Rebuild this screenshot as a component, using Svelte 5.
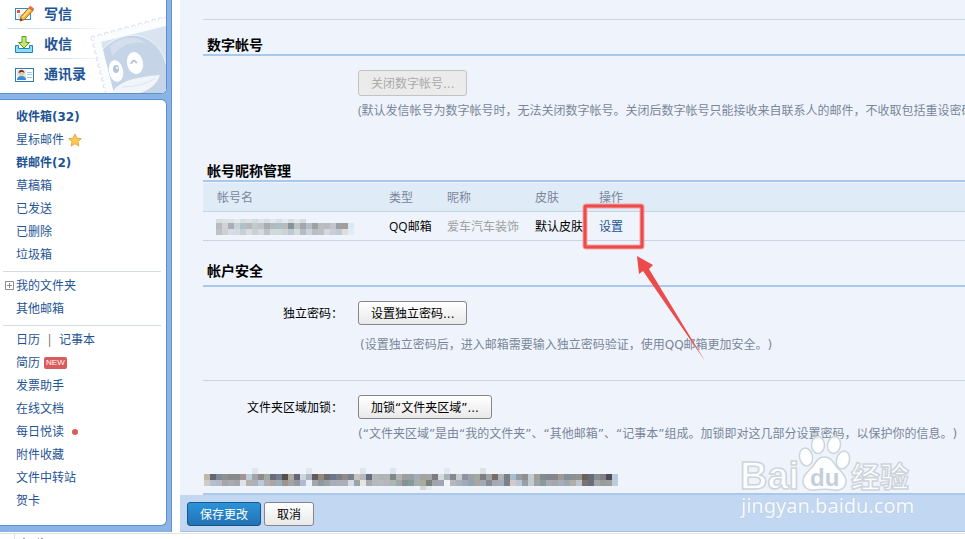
<script>
	const mailboxes = [
		{ name: '收件箱(32)', bold: true },
		{ name: '星标邮件', star: true },
		{ name: '群邮件(2)', bold: true },
		{ name: '草稿箱' },
		{ name: '已发送' },
		{ name: '已删除' },
		{ name: '垃圾箱' }
	];

	const tools = [
		{ name: '发票助手' },
		{ name: '在线文档' },
		{ name: '每日悦读', dot: true },
		{ name: '附件收藏' },
		{ name: '文件中转站' },
		{ name: '贺卡' }
	];

	// each row: [y, height, colours left to right], '-' leaves a hole
	const accountMask = [
		[0, 4, 'd9dde0 d8e1e4 dde0e6 e3e8ee d5dde4 dce2e8 d2dce4 dfe3ea d8dee4 e3e9f0 d8dfe8 e5eaf2 d7dee6 e2e8f0 d4dbe3 - - - - - - - -'],
		[4, 6, 'b8babb cfd3d3 a9adb8 c9d0d8 afc2c6 b8b9bb c2c9ca bec5c6 a9adaf b3b9bc a9c2c5 b9bbb8 86949a bdc2c5 a4a7ac b8bcc5 a0a1a6 bdbdc0 b9bbbe c2c5c9 9ea1a4 a39f97 d8eafa'],
		[10, 6, 'bec2c8 cbd0d2 d8dce2 d3dbe2 c5cfd4 d8dce4 c9cfd4 d5d9dc bcc4c8 d3d8dc d2d8de cdd2d8 c0c8cf d5dade b4bcc6 cdd2da b9bdc4 bcc1c8 d3d9e0 c9ced6 c2cad2 dcdfda e0edf9']
	];

	const lineMask = [
		[0, 6, '- - - - - - - - e0e6ed - - - - - - - - e2e7ef - - - - - - - - dfe5ec - - - - dee5ea - - - - - - - - e3e9f1 - - - - - dce3e6 -'],
		[6, 6, 'c0b8a6 67647c 7d8b95 8d8f90 878a8b 868a8c a19494 bccdd8 a2a4aa 918a8d a3aaa4 696d78 757d95 554e4c abaaa2 66637a cfd6da aab5c2 605d5b 8e887f 6a6c72 6c7688 7a7f86 908a8a 7a838c c8c2c0 b9b8bd 686e80 b2b8b8 adb4b3 b0b5b5 7f8a88 b0b3b5 a09d9a 93a2a8 a7adb3 a3a29f a4a4a4 7a7d85 d5d8dc abb2ba 84898e c4cccf 8d94a1 9da2a4 a2aaa0 7e7f80 9fa2a4 7a6b66 abb2b8 7e7f83 a9bdd2 969ea4 8e8f92 c2cccf a49e99 7b8d8c 858689 87868a a09b92 818f9b 8b9190 8f958e 6f5f5a 676b7c 8a8d92 808089 4e4a58 b9cbdb'],
		[12, 6, 'd0cbc3 b2bfd0 b6bac6 a4a6ab a8abb1 a5a6a9 dfe3e9 b7b1ae aeb0b8 b9c9d7 b3aead aaa6a3 9eaeba 9b948f a5a3a5 9599a2 b3bad0 eaf0f7 a5a6aa 8f989f 9ba3a2 a9adb9 abafb8 acafb6 d4dde7 9ca3ad e8e5df a8aab2 b5b9bb b7babe b4b8bc a9b7b1 a2a7a9 849293 889999 a6aeac a8ab9f 7b827c 9ea4aa a2a6b2 f0f4fa b5b8bf abb1bb a3aab7 92a4b2 a9a49f a2a9b6 8a8c94 a4a8af a4acb5 7e8288 d1ccc9 b7c7d6 989fa5 c2ccd0 9ea3a5 8b9a9d a7abb3 a4a8ac a9adb4 9fa7b1 b1afa8 bec5cd 7c736f 686e7d a3a5a7 999b9c 9ba09f bccddb'],
		[18, 4, '- - - - - - - - - - - - - - - - - - - - - - - - - - - - - - - - - - - - d2d5da e3ebf6']
	];

	function cells(rows) {
		return rows.flatMap(([y, h, colours]) =>
			colours
				.split(' ')
				.map((c, i) => ({ x: i * 6, y, h, fill: '#' + c, skip: c === '-' }))
				.filter((c) => !c.skip)
		);
	}
</script>

<div class="page">
	<div class="body">
		<aside>
			<nav class="card quick">
				<svg class="stamp" width="76" height="77" viewBox="0 0 76 77" aria-hidden="true">
					<path d="M3 22 L76 2 V77 H17 Z" fill="#fbfcfe" stroke="#dbe3ed" stroke-width="5" stroke-linecap="round" stroke-dasharray="0 7" />
					<path d="M3 22 L76 2 V77 H17 Z" fill="#fbfcfe" stroke="#fbfcfe" stroke-width="3" stroke-linecap="round" stroke-dasharray="0 7" />
					<path d="M11 26 L76 10 V77 H24 Z" fill="#dae4f0" />
					<path d="M13 33 C26 19 48 14 62 26 C70 32 74 40 76 48 V77 H24 Z" fill="#c5d5e7" />
					<path d="M13 33 C26 19 48 14 62 26 C70 32 74 40 76 48" fill="none" stroke="#edf2f8" stroke-width="1" />
					<path d="M20 30 C32 20 46 20 56 27 C44 25 32 28 22 40z" fill="#d3dfec" />
					<ellipse cx="26" cy="55" rx="7" ry="11" fill="#fff" transform="rotate(-12 26 55)" />
					<ellipse cx="45" cy="47" rx="8" ry="11" fill="#fff" transform="rotate(-12 45 47)" />
					<ellipse cx="26" cy="53" rx="3" ry="4" fill="#b4c6dc" />
					<circle cx="27" cy="52" r="1" fill="#fff" />
					<path d="M41 48 Q43 42 47 47" fill="none" stroke="#b4c6dc" stroke-width="2" />
					<path d="M22 77 C28 65 46 61 70 59 C67 68 60 74 50 77z" fill="#f1f5fa" />
					<path d="M32 71 Q52 71 66 62" fill="none" stroke="#dae4ef" />
				</svg>
				<a href="#compose">
					<svg width="20" height="18" viewBox="0 0 20 18" aria-hidden="true">
						<rect x="1.500" y="3.500" width="15" height="11" fill="#fff" stroke="#3c86c0" />
						<rect x="3" y="5" width="3" height="3" fill="#e8513d" />
						<path d="M4 10h5M4 12h3" stroke="#a8c6e0" />
						<path d="M6 16l1-4.500L15 2.500l4 3L10.500 14.500z" fill="#f9b233" stroke="#b26a1c" />
						<path d="M8.500 12.500L16 4.500" stroke="#ffe38a" stroke-width="1.500" />
						<path d="M15 2.500l1.500-1.200 3.200 2.500-1 1.700z" fill="#e77b66" stroke="#b25540" stroke-width=".7" />
						<path d="M6 16l.8-2.800 2 1.800z" fill="#4a3a30" />
					</svg>
					写信
				</a>
				<a href="#receive">
					<svg width="20" height="18" viewBox="0 0 20 18" aria-hidden="true">
						<path d="M1.500 10.500h3v3h11v-3h3v7h-17z" fill="#8bdcf6" stroke="#2682bb" />
						<path d="M8 1.500h4v6h3.500L10 13 4.500 7.500H8z" fill="#c6e878" stroke="#5b9b20" />
					</svg>
					收信
				</a>
				<a href="#contacts">
					<svg width="20" height="18" viewBox="0 0 20 18" aria-hidden="true">
						<rect x="1.500" y="3.500" width="18" height="13" fill="#fff" stroke="#2f7ab8" />
						<rect x="3" y="5" width="9" height="10" fill="#d5ebfa" />
						<path d="M3 15c0-3 2-4 4.500-4s4.500 1 4.500 4z" fill="#3f8ad0" />
						<circle cx="7.500" cy="8.500" r="2.500" fill="#f7c59d" />
						<path d="M4.500 8.500c0-5 6-5 6 0-1-2-4-2-6 0z" fill="#7c3422" />
						<path d="M13 7.500h5M13 9.500h5M13 12.500h5" stroke="#a4c7e4" />
					</svg>
					通讯录
				</a>
			</nav>

			<nav class="card folders">
				<ul>
					{#each mailboxes as box}
						<li>
							<a href="#folder" class:bold={box.bold}>{box.name}</a>
							{#if box.star}
								<svg class="star" width="14" height="14" viewBox="0 0 14 14" aria-hidden="true">
									<path d="M7 1l1.800 4.200 4.500.4-3.400 3 1 4.500L7 10.700l-3.900 2.400 1-4.500-3.400-3 4.500-.4z" fill="#fcc94b" stroke="#e9a650" />
								</svg>
							{/if}
						</li>
					{/each}
				</ul>
				<hr />
				<ul>
					<li class="tree">
						<button class="expand" aria-label="我的文件夹">
							<svg width="9" height="9" viewBox="0 0 9 9" aria-hidden="true">
								<path d="M.5.5h8v8h-8zM2 4.500h5M4.500 2v5" fill="none" stroke="#8c8c8c" />
							</svg>
						</button>
						<a href="#mine">我的文件夹</a>
					</li>
					<li><a href="#other">其他邮箱</a></li>
				</ul>
				<hr />
				<ul>
					<li>
						<a href="#calendar">日历</a><span class="bar">|</span><a href="#notes">记事本</a>
					</li>
					<li><a href="#resume">简历</a><span class="new">NEW</span></li>
					{#each tools as tool}
						<li>
							<a href="#tool">{tool.name}</a>
							{#if tool.dot}<span class="dot"></span>{/if}
						</li>
					{/each}
				</ul>
			</nav>
		</aside>

		<main>
			<div class="content">
				<section class="numeric">
					<h2>数字帐号</h2>
					<div class="field">
						<button class="btn" disabled>关闭数字帐号...</button>
						<p>(默认发信帐号为数字帐号时，无法关闭数字帐号。关闭后数字帐号只能接收来自联系人的邮件，不收取包括重设密码</p>
					</div>
				</section>

				<section class="accounts">
					<h2>帐号昵称管理</h2>
					<table>
						<thead>
							<tr>
								<th class="c-name">帐号名</th>
								<th class="c-type">类型</th>
								<th class="c-nick">昵称</th>
								<th class="c-skin">皮肤</th>
								<th>操作</th>
							</tr>
						</thead>
						<tbody>
							<tr>
								<td>
									<svg class="mask" width="138" height="16" aria-hidden="true">
										{#each cells(accountMask) as c}
											<rect x={c.x} y={c.y} width="6" height={c.h} fill={c.fill} />
										{/each}
									</svg>
								</td>
								<td>QQ邮箱</td>
								<td class="muted">爱车汽车装饰</td>
								<td>默认皮肤</td>
								<td>
									<span class="action">
										<a href="#set">设置</a>
										<svg class="pointer" width="126" height="162" viewBox="0 0 126 162" aria-hidden="true">
											<rect x="3" y="3" width="57" height="41" rx="1" fill="none" stroke="#f4a3a6" stroke-width="5" />
											<rect x="3" y="3" width="57" height="41" rx="1" fill="none" stroke="#ec4a4b" stroke-width="3" />
											<path d="M55 53L71 62 67 66 123 158 61 68 57 71z" fill="#ec4a4b" />
										</svg>
									</span>
								</td>
							</tr>
						</tbody>
					</table>
				</section>

				<section class="security">
					<h2>帐户安全</h2>
					<div class="row">
						<label for="password">独立密码：</label>
						<div>
							<button class="btn" id="password">设置独立密码...</button>
							<p>(设置独立密码后，进入邮箱需要输入独立密码验证，使用QQ邮箱更加安全。)</p>
						</div>
					</div>
					<div class="row lock">
						<label for="lock">文件夹区域加锁：</label>
						<div>
							<button class="btn" id="lock">加锁“文件夹区域”...</button>
							<p>(“文件夹区域”是由“我的文件夹”、“其他邮箱”、“记事本”组成。加锁即对这几部分设置密码，以保护你的信息。)</p>
						</div>
					</div>
				</section>

				<svg class="mask line" width="414" height="22" aria-hidden="true">
					{#each cells(lineMask) as c}
						<rect x={c.x} y={c.y} width="6" height={c.h} fill={c.fill} />
					{/each}
				</svg>
			</div>

			<footer>
				<button class="btn primary">保存更改</button>
				<button class="btn">取消</button>
			</footer>
		</main>
	</div>

	<div class="strip">
		<svg width="50" height="5" viewBox="0 0 50 5" aria-hidden="true">
			<path d="M14.500 0v5" stroke="#e3e3e3" />
			<path d="M23 4.500h2M38 4.500h1M41 4.500h2" stroke="#999" />
		</svg>
	</div>

	<svg class="watermark" width="176" height="84" viewBox="0 0 176 84" aria-hidden="true">
		<g fill="#fff" fill-opacity=".85" stroke="#cdd4dc" stroke-width="1.500">
			<text class="wm-logo" x="1" y="54">Bai</text>
			<ellipse cx="67" cy="22" rx="6.500" ry="9" transform="rotate(-12 67 22)" />
			<ellipse cx="79" cy="10" rx="6.500" ry="8.500" />
			<ellipse cx="95" cy="10" rx="6.500" ry="8.500" transform="rotate(12 95 10)" />
			<ellipse cx="104" cy="25" rx="6.500" ry="9" transform="rotate(15 104 25)" />
			<path d="M85 22c7 0 9 5 12 9 4 5 10 8 10 15 0 8-7 10-12 9-6-1-13-1-19 0-6 1-12-2-12-9s6-10 10-15c3-4 5-9 11-9z" />
			<text class="wm-cn" x="112" y="53">经验</text>
		</g>
		<text class="wm-du" x="71" y="51">du</text>
		<text class="wm-url" x="2" y="78">jingyan.baidu.com</text>
	</svg>
</div>

<style>
	:global(body) {
		margin: 0;
		background: #fff;
		overflow: hidden;
	}

	.page {
		position: relative;
		overflow: hidden;
		font: 12px/20px "Open Sans", "Noto Sans CJK SC", sans-serif;
		text-spacing-trim: space-all;
		color: #000;
	}

	.body {
		display: grid;
		grid-template-columns: 172px minmax(0, 1fr);
		column-gap: 8px;
	}

	a {
		color: #1e5494;
		text-decoration: none;
	}

	aside {
		box-sizing: border-box;
		display: flex;
		flex-direction: column;
		gap: 5px;
		padding: 0 4px 6px 0;
		background: #8ab4e8;
		border-right: 1px solid #6794cc;
	}

	.card {
		background: #fff;
		border: 1px solid #5f8fca;
		border-left: 0;
		border-radius: 0 6px 6px 0;
	}

	.quick {
		position: relative;
		margin-top: -1px;
		padding-bottom: 4px;
		border-top: 0;
		border-top-right-radius: 0;
		overflow: hidden;
	}

	.quick a {
		position: relative;
		display: flex;
		align-items: center;
		gap: 10px;
		height: 29px;
		padding-left: 14px;
		font-size: 14px;
		font-weight: bold;
		border-bottom: 1px solid transparent;
	}

	.quick a:not(:last-child) {
		border-image: linear-gradient(90deg, #fff 4%, #cfdded 6%, #d8e3f0 40%, transparent 65%) 1;
	}

	.stamp {
		position: absolute;
		right: 0;
		bottom: 0;
	}

	.folders {
		flex: 1;
		padding: 5px 5px 12px 0;
	}

	ul {
		list-style: none;
		margin: 0;
		padding: 0 0 0 16px;
	}

	li {
		display: flex;
		align-items: center;
		height: 23px;
	}

	.folders hr {
		margin: 5px 0 2px 3px;
	}

	hr {
		height: 1px;
		border: 0;
		background: #d5dbe5;
	}

	.bold {
		font-family: "DejaVu Sans", "Noto Sans CJK SC", sans-serif;
		font-weight: bold;
	}

	.star {
		margin-left: 4px;
	}

	.tree {
		margin-left: -11px;
	}

	.expand {
		display: flex;
		margin: 0 2px 0 0;
		padding: 0;
		border: 0;
		background: none;
	}

	.bar {
		width: 19px;
		text-align: center;
		color: #666;
	}

	.new {
		margin-left: 4px;
		padding: 0 2px;
		font: 8px/12px "Liberation Sans", Arial, sans-serif;
		color: #fff;
		background: #db5a5c;
		border-radius: 2px;
	}

	.dot {
		width: 6px;
		height: 6px;
		margin-left: 8px;
		border-radius: 50%;
		background: #db5a5c;
	}

	main {
		background: #eff4fc;
		border-bottom: 1px solid #a5bfdc;
		overflow: hidden;
	}

	.content {
		margin-left: 23px;
		padding-top: 19px;
		border-bottom: 2px solid #a9c8ea;
	}

	h2 {
		margin: 0;
		padding: 0 4px;
		font-size: 14px;
		line-height: 18px;
		border-bottom: 2px solid #a9c8ea;
	}

	.numeric {
		padding-top: 16px;
		border-top: 1px solid #c8d5e3;
	}

	.field {
		padding: 14px 0 0 155px;
	}

	p {
		margin: 0;
		color: #798699;
		white-space: nowrap;
	}

	.numeric p {
		margin-top: 5px;
	}

	.btn {
		box-sizing: border-box;
		display: block;
		height: 24px;
		padding: 1px 12px 0;
		font: 12px/20px "DejaVu Sans", "Noto Sans CJK SC", sans-serif;
		color: #000;
		background: linear-gradient(#fff, #e9e9e9);
		border: 1px solid #868686;
		border-radius: 3px;
	}

	.btn:disabled {
		height: 26px;
		color: #aaa;
		background: #ebebeb;
		border-color: #c3c3c3;
	}

	.btn.primary {
		color: #fff;
		background: linear-gradient(#2b93d8, #2273b4);
		border-color: #1a5685;
	}

	.accounts {
		padding-top: 41px;
	}

	table {
		width: 100%;
		margin-top: 1px;
		table-layout: fixed;
		border-collapse: separate;
		border-spacing: 0;
	}

	th,
	td {
		height: 26px;
		padding: 2px 0 0;
		text-align: left;
		font-weight: normal;
		white-space: nowrap;
		border-bottom: 1px solid #c5d5e6;
	}

	th {
		color: #798699;
		background: #e0ebf8;
	}

	th:first-child {
		padding-left: 14px;
	}

	td:first-child {
		padding-left: 13px;
	}

	.c-name {
		width: 172px;
	}

	.c-type {
		width: 58px;
	}

	.c-nick {
		width: 88px;
	}

	.c-skin {
		width: 64px;
	}

	.muted {
		color: #a0a0a0;
	}

	.mask {
		display: block;
	}

	.action {
		position: relative;
	}

	.pointer {
		position: absolute;
		left: -17px;
		top: -15px;
		z-index: 2;
		pointer-events: none;
	}

	.security {
		padding-top: 21px;
	}

	.security h2 {
		padding-bottom: 5px;
	}

	.security p {
		font-family: "DejaVu Sans", "Noto Sans CJK SC", sans-serif;
	}

	.row {
		display: grid;
		grid-template-columns: 140px 1fr;
		column-gap: 15px;
		padding: 14px 0 25px;
	}

	.row label {
		padding-top: 3px;
		text-align: right;
		white-space: nowrap;
	}

	.row p {
		margin: 10px 0 0 2px;
	}

	.lock {
		padding-bottom: 24px;
		border-top: 1px solid #c3d4e6;
	}

	.lock p {
		margin: 5px 0 0;
	}

	.line {
		margin: 0 0 3px 1px;
	}

	footer {
		display: flex;
		gap: 3px;
		padding: 7px 7px 5px;
		background: #c2d8f2;
	}

	.strip {
		height: 5px;
		margin-top: 1px;
		border-top: 1px solid #e3e3e3;
	}

	.strip svg {
		display: block;
	}

	.watermark {
		position: absolute;
		right: 50px;
		bottom: 20px;
		pointer-events: none;
	}

	.wm-logo {
		font: bold 38px "Liberation Sans", Arial, sans-serif;
	}

	.wm-cn {
		font: bold 29px "Noto Sans CJK SC", sans-serif;
	}

	.wm-du {
		font: bold 24px "Liberation Sans", Arial, sans-serif;
		fill: #c6ced9;
	}

	.wm-url {
		font: 20px "Noto Sans", sans-serif;
		fill: #f6f9fd;
		stroke: #b9cade;
		stroke-width: 1px;
		paint-order: stroke;
	}
</style>
